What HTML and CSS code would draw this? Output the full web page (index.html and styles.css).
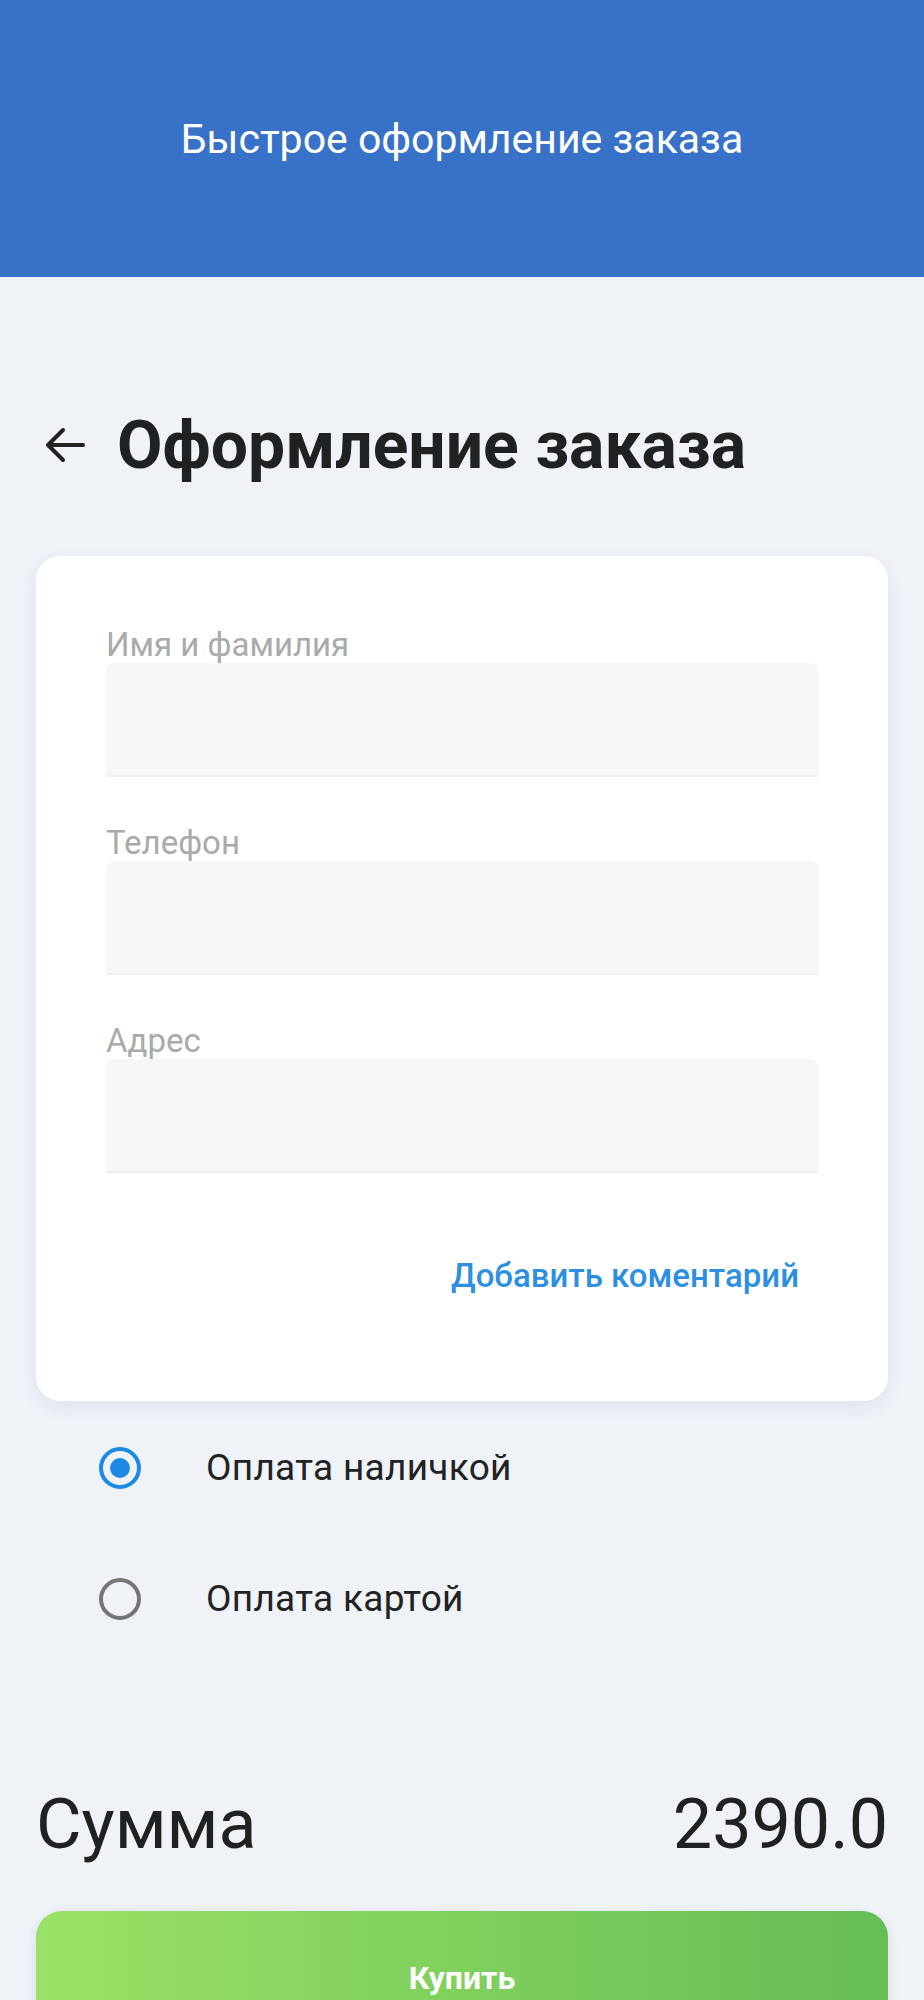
FILE: index.html
```html
<!DOCTYPE html>
<html>
<head>
<meta charset="utf-8">
<title>Оформление заказа</title>
<link rel="stylesheet" href="styles.css">
</head>
<body>

<div class="appbar">
    <span class="appbar-title">Быстрое оформление заказа</span>
</div>

<div class="page">

    <div class="page-head">
        <svg class="back" width="40" height="36" viewBox="0 0 40 36">
            <path d="M38 18 H4 M18 3 L3 18 L18 33" fill="none" stroke="#222" stroke-width="4" stroke-linecap="round" stroke-linejoin="round"/>
        </svg>
        <h1>Оформление заказа</h1>
    </div>

    <form class="card" name="Order">
        <label class="field-label">Имя и фамилия</label>
        <div class="field"></div>

        <label class="field-label">Телефон</label>
        <div class="field"></div>

        <label class="field-label">Адрес</label>
        <div class="field"></div>

        <div class="comment-row">
            <a class="comment-link">Добавить коментарий</a>
        </div>
    </form>

    <div class="payments">
        <div class="pay-row">
            <span class="radio checked"></span>
            <span class="pay-label">Оплата наличкой</span>
        </div>
        <div class="pay-row">
            <span class="radio"></span>
            <span class="pay-label">Оплата картой</span>
        </div>
    </div>

    <div class="total">
        <span>Сумма</span>
        <span>2390.0</span>
    </div>

    <button type="button" class="buybtn">Купить</button>

</div>

</body>
</html>
```

FILE: styles.css
```css
body {
    margin: 0;
    background-color: #eff2f7;
    font-family: Roboto, "Noto Sans", sans-serif;
    color: #222;
}

.appbar {
    height: 277px;
    background-color: #3872c8;
    display: flex;
    align-items: center;
    justify-content: center;
}

.appbar-title {
    color: #fff;
    font-size: 41px;
}

.page {
    padding: 0 36px;
}

.page-head {
    display: flex;
    align-items: center;
    height: 80px;
    margin-top: 128px;
}

.back {
    margin-left: 9px;
    margin-right: 32px;
}

h1 {
    margin: 0;
    font-size: 66px;
    font-weight: 700;
    color: #212121;
}

.card {
    margin-top: 71px;
    background-color: #fff;
    border-radius: 24px;
    padding: 70px 70px 105px 70px;
    box-shadow: 0 6px 18px rgba(40, 60, 100, 0.08);
}

.field-label {
    display: block;
    font-size: 33px;
    line-height: 37px;
    color: #aaa;
}

.field {
    height: 112px;
    margin-bottom: 47px;
    background-color: #f7f7f7;
    border-bottom: 2px solid #efefef;
    border-radius: 8px 8px 0 0;
}

.comment-row {
    display: flex;
    justify-content: flex-end;
    margin-top: 83px;
}

.comment-link {
    margin-right: 19px;
    font-size: 33px;
    font-weight: 500;
    line-height: 40px;
    color: #2d8fe2;
}

.payments {
    padding-top: 1px;
}

.pay-row {
    display: flex;
    align-items: center;
    height: 131px;
}

.radio {
    box-sizing: border-box;
    width: 42px;
    height: 42px;
    margin-left: 63px;
    margin-right: 65px;
    border: 4px solid #757575;
    border-radius: 50%;
    display: flex;
    align-items: center;
    justify-content: center;
}

.radio.checked {
    border-color: #1e88e5;
}

.radio.checked::after {
    content: "";
    width: 20px;
    height: 20px;
    border-radius: 50%;
    background-color: #1e88e5;
}

.pay-label {
    font-size: 37px;
    letter-spacing: 0.3px;
    color: #222;
}

.total {
    display: flex;
    justify-content: space-between;
    align-items: center;
    margin-top: 120px;
    font-size: 70px;
    line-height: 80px;
    color: #212121;
}

.buybtn {
    display: block;
    width: 100%;
    height: 134px;
    margin-top: 47px;
    border: none;
    border-radius: 26px;
    background: linear-gradient(to right, #99e266, #66bd55);
    box-shadow: 0 4px 12px rgba(40, 60, 100, 0.12);
    color: #fff;
    font-family: Roboto, sans-serif;
    font-size: 32px;
    font-weight: 700;
}
```
